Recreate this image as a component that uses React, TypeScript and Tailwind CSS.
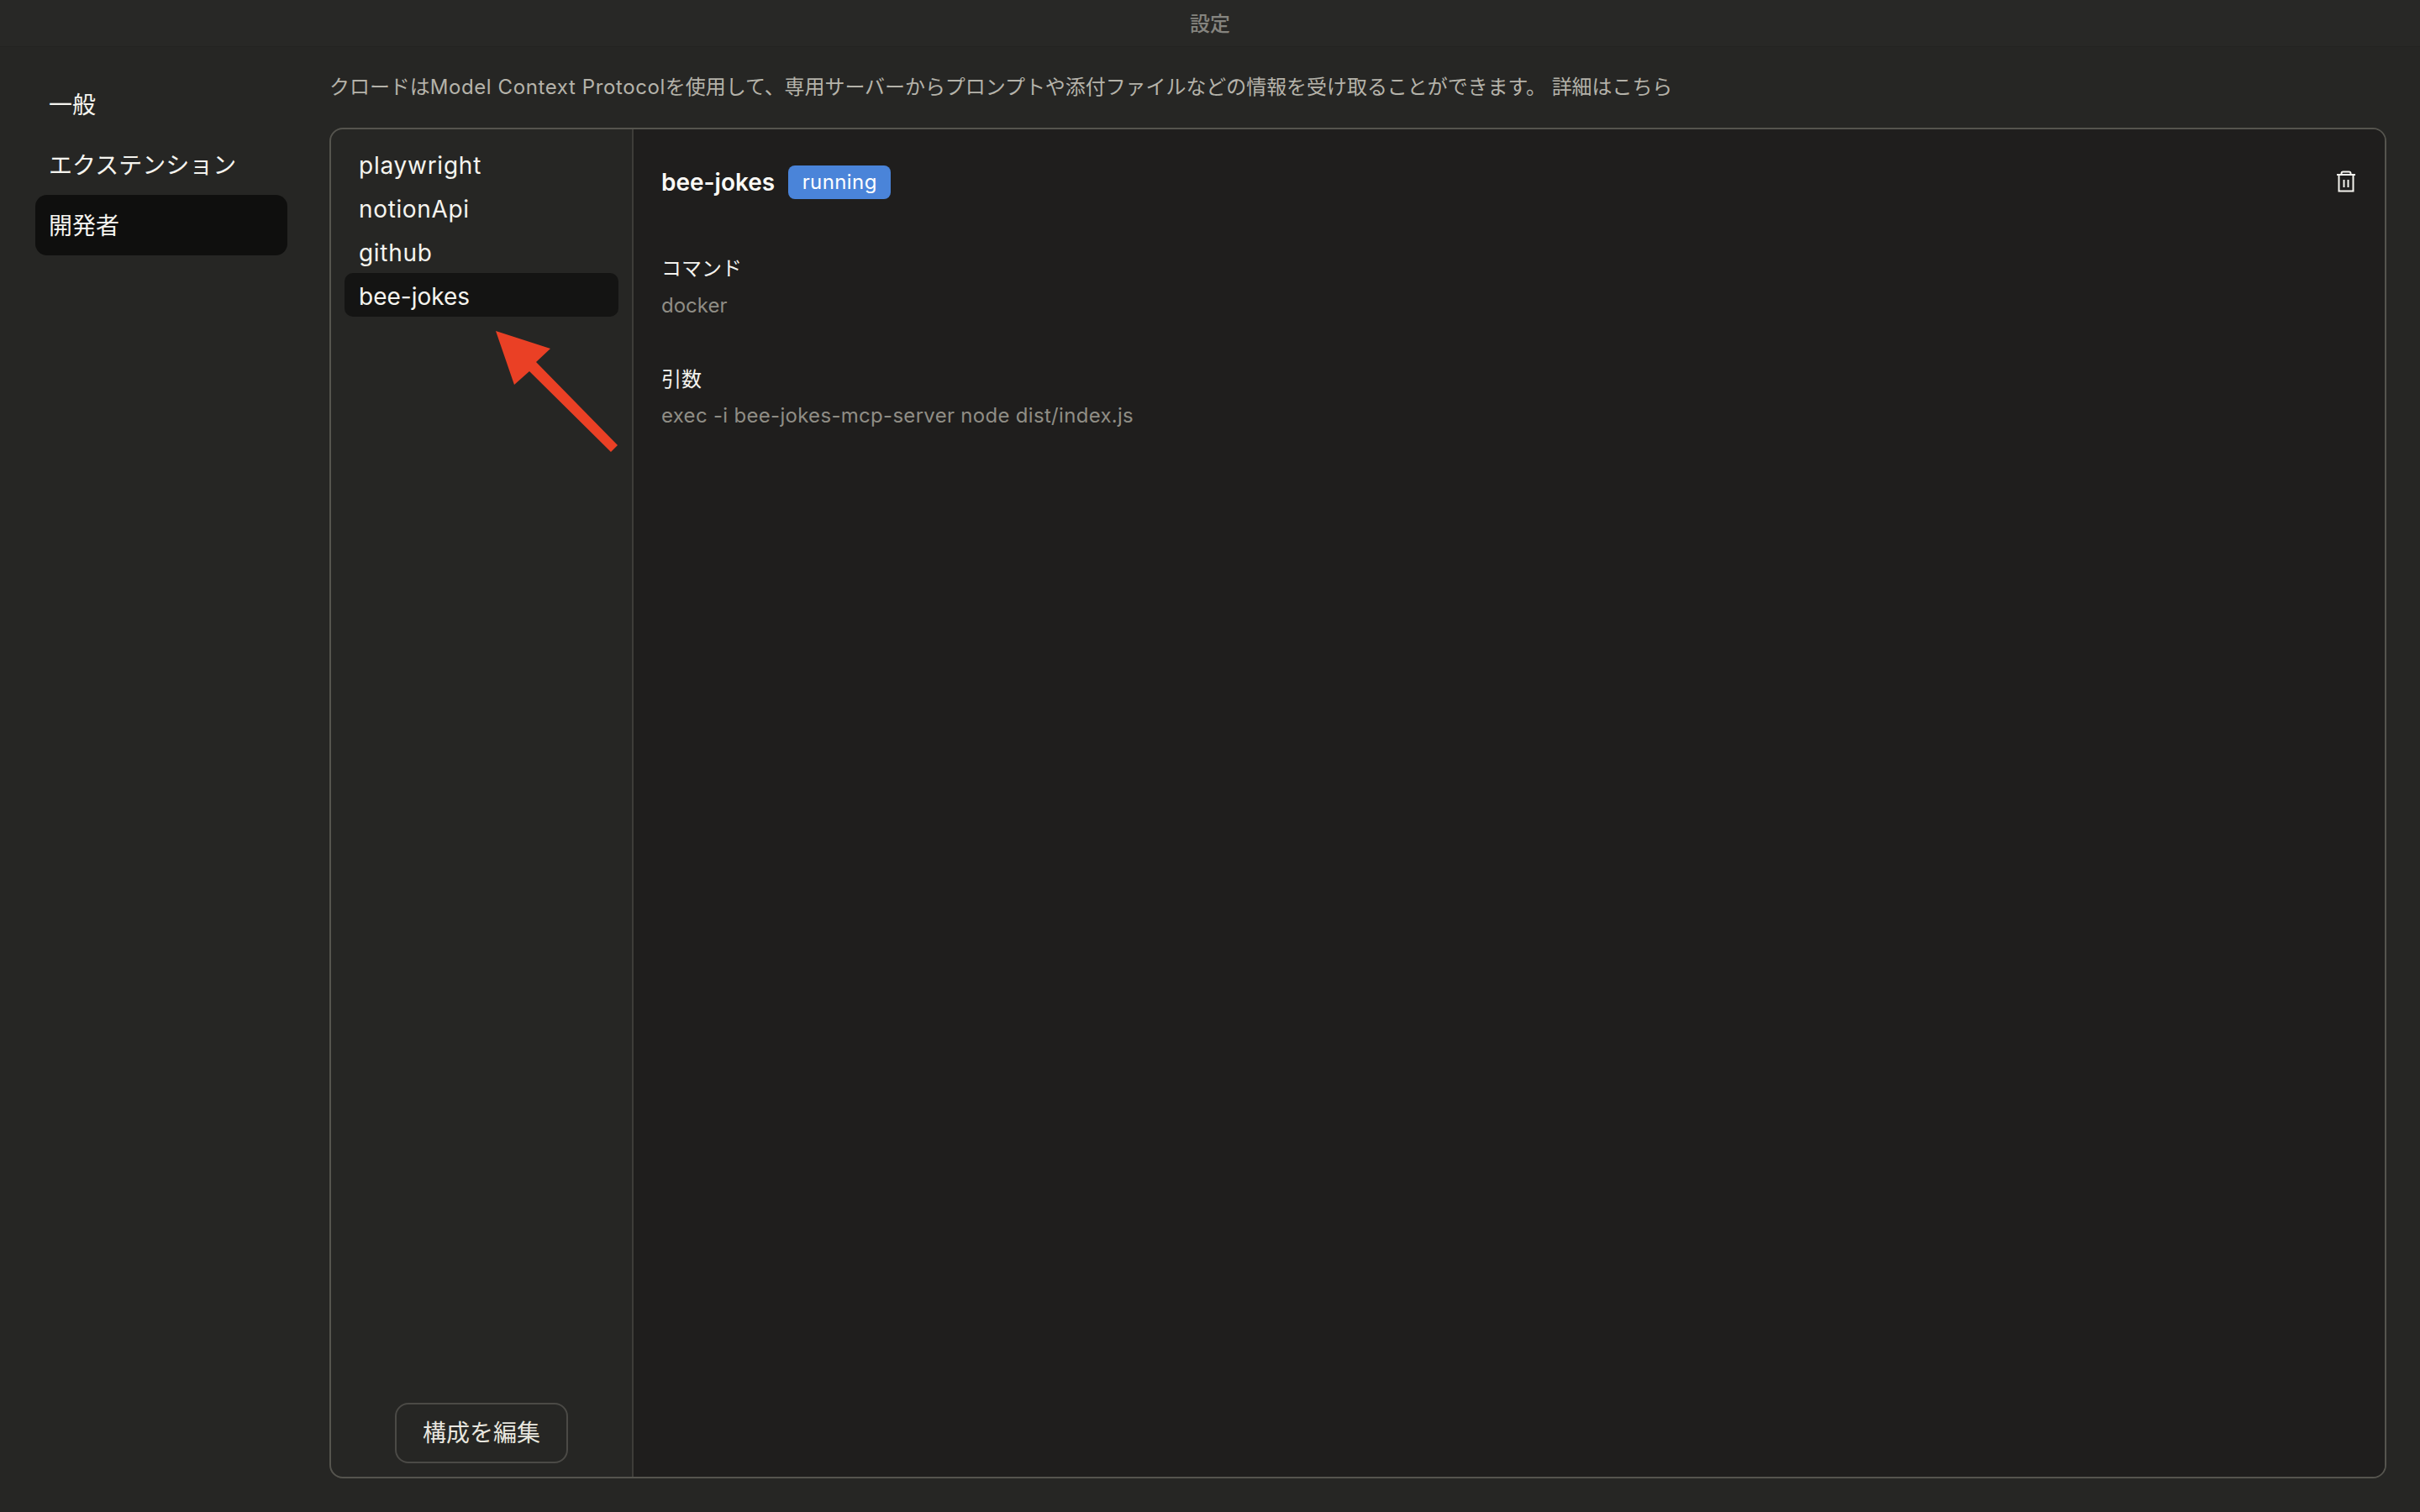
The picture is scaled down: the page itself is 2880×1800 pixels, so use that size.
import React from 'react';

const FONT = "font-['Inter','Noto_Sans_CJK_JP',sans-serif]";

const navItems = ['一般', 'エクステンション', '開発者'];
const servers = [
  { name: 'playwright', tracking: 'tracking-[0.75px]' },
  { name: 'notionApi', tracking: 'tracking-[0.65px]' },
  { name: 'github', tracking: 'tracking-[0.7px]' },
  { name: 'bee-jokes', tracking: 'tracking-normal' },
];

function TrashIcon() {
  return (
    <svg width="24" height="26" viewBox="0 0 24 26" fill="none" stroke="#f5f4ef" strokeWidth="2">
      <path d="M1 5h22" />
      <path d="M6.5 5V3.5Q6.5 1.5 8.5 1.5h7q2 0 2 2V5" />
      <path d="M3.5 5v19.5h17V5" />
      <path d="M9.5 11v9M14.5 11v9" />
    </svg>
  );
}

function Arrow() {
  return (
    <svg
      className="absolute left-[196px] top-[240px]"
      width="150"
      height="150"
      viewBox="0 0 150 150"
      fill="#ea4025"
    >
      <path d="M0 0L65 21L48 37L145 136L137 144L40 48L22 64Z" />
    </svg>
  );
}

export default function App() {
  return (
    <div className={`${FONT} flex h-[1800px] w-[2880px] flex-col bg-[#262624]`}>
      <header className="flex h-14 shrink-0 items-center justify-center border-b border-[#232321] bg-[#282826] pt-[2px] text-[24px] font-medium text-[#85847f]">
        設定
      </header>

      <div className="flex min-h-0 flex-1">
        <aside className="w-[392px] shrink-0 pl-[42px] pt-8">
          <nav className="flex w-[300px] flex-col">
            {navItems.map((item) => (
              <div
                key={item}
                className={`flex h-[72px] items-center rounded-[14px] pl-4 pt-[2px] text-[28px] text-[#f5f4ef] ${
                  item === '開発者' ? 'bg-[#0f0f0e]' : ''
                }`}
              >
                {item}
              </div>
            ))}
          </nav>
        </aside>

        <main className="flex min-w-0 flex-1 flex-col pb-10 pr-10">
          <p className="flex h-24 shrink-0 items-center text-[24px] tracking-[-0.06px] text-[#b5b3aa]">
            クロードは
            <span className="tracking-[0.6px]">Model Context Protocol</span>
            を使用して、専用サーバーからプロンプトや添付ファイルなどの情報を受け取ることができます。 詳細はこちら
          </p>

          <section className="relative flex min-h-0 flex-1 overflow-hidden rounded-2xl border-2 border-[#55544e]">
            <div className="flex w-[360px] shrink-0 flex-col justify-between border-r-2 border-[#3e3d39] px-4 pb-4 pt-[15px]">
              <ul>
                {servers.map(({ name, tracking }) => (
                  <li
                    key={name}
                    className={`flex h-[52px] items-center rounded-[10px] pl-[17px] pt-[3px] text-[28px] text-[#f5f4ef] ${tracking} ${
                      name === 'bee-jokes' ? 'bg-[#141413]' : ''
                    }`}
                  >
                    {name}
                  </li>
                ))}
              </ul>
              <button className="mx-auto h-[72px] w-[206px] rounded-2xl border-2 border-[#4b4a46] text-[28px] text-[#e8e6df]">
                構成を編集
              </button>
            </div>

            <div className="min-w-0 flex-1 bg-[#1f1e1d] pl-[33px] pr-8 pt-[43px]">
              <div className="flex h-10 items-center">
                <h2 className="text-[28px] font-semibold text-[#faf9f5]">bee-jokes</h2>
                <span className="ml-4 flex h-10 w-[122px] items-center justify-center rounded-lg bg-[#4a84d9] text-[24px] tracking-[0.4px] text-white">
                  running
                </span>
                <button className="ml-auto mr-[2px] mt-[-2px]">
                  <TrashIcon />
                </button>
              </div>

              <div className="mt-[65px]">
                <p className="text-[24px] leading-9 text-[#f5f4ef]">コマンド</p>
                <p className="mt-2 text-[24px] leading-9 text-[#8f8d85]">docker</p>
              </div>
              <div className="mt-[52px]">
                <p className="text-[24px] leading-9 text-[#f5f4ef]">引数</p>
                <p className="mt-[7px] text-[24px] leading-9 tracking-[0.3px] text-[#8f8d85]">
                  exec -i bee-jokes-mcp-server node dist/index.js
                </p>
              </div>
            </div>

            <Arrow />
          </section>
        </main>
      </div>
    </div>
  );
}
